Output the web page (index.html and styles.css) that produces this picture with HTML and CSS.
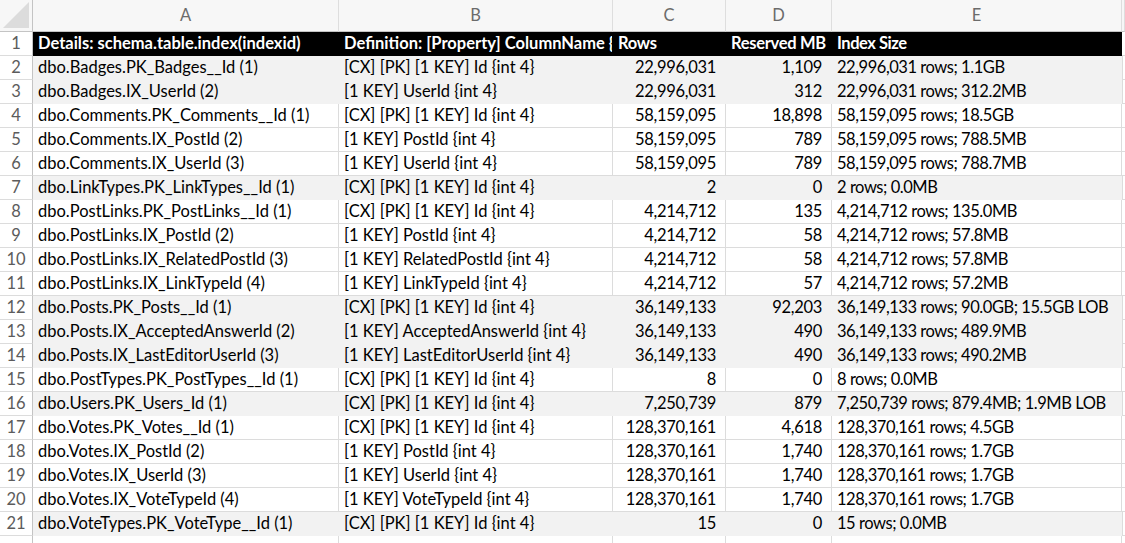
FILE: index.html
```html
<!DOCTYPE html>
<html>
<head>
<meta charset="utf-8">
<link rel="stylesheet" href="styles.css">
</head>
<body>
<div class="sheet">
  <div class="row colhead">
    <div class="cell corner"><div class="tri"></div></div>
    <div class="cell">A</div><div class="cell">B</div><div class="cell">C</div><div class="cell">D</div><div class="cell">E</div><div class="cell extra"></div>
  </div>
  <div class="row title">
    <div class="cell rn">1</div>
    <div class="cell">Details: schema.table.index(indexid)</div>
    <div class="cell">Definition: [Property] ColumnName {</div>
    <div class="cell">Rows</div>
    <div class="cell">Reserved MB</div>
    <div class="cell">Index Size</div>
    <div class="cell extra"></div>
  </div>
  <div class="row band"><div class="cell rn">2</div><div class="cell">dbo.Badges.PK_Badges__Id (1)</div><div class="cell">[CX] [PK] [1 KEY] Id {int 4}</div><div class="cell num">22,996,031</div><div class="cell num">1,109</div><div class="cell">22,996,031 rows; 1.1GB</div><div class="cell extra"></div></div>
  <div class="row band"><div class="cell rn">3</div><div class="cell">dbo.Badges.IX_UserId (2)</div><div class="cell">[1 KEY] UserId {int 4}</div><div class="cell num">22,996,031</div><div class="cell num">312</div><div class="cell">22,996,031 rows; 312.2MB</div><div class="cell extra"></div></div>
  <div class="row"><div class="cell rn">4</div><div class="cell">dbo.Comments.PK_Comments__Id (1)</div><div class="cell">[CX] [PK] [1 KEY] Id {int 4}</div><div class="cell num">58,159,095</div><div class="cell num">18,898</div><div class="cell">58,159,095 rows; 18.5GB</div><div class="cell extra"></div></div>
  <div class="row"><div class="cell rn">5</div><div class="cell">dbo.Comments.IX_PostId (2)</div><div class="cell">[1 KEY] PostId {int 4}</div><div class="cell num">58,159,095</div><div class="cell num">789</div><div class="cell">58,159,095 rows; 788.5MB</div><div class="cell extra"></div></div>
  <div class="row"><div class="cell rn">6</div><div class="cell">dbo.Comments.IX_UserId (3)</div><div class="cell">[1 KEY] UserId {int 4}</div><div class="cell num">58,159,095</div><div class="cell num">789</div><div class="cell">58,159,095 rows; 788.7MB</div><div class="cell extra"></div></div>
  <div class="row band"><div class="cell rn">7</div><div class="cell">dbo.LinkTypes.PK_LinkTypes__Id (1)</div><div class="cell">[CX] [PK] [1 KEY] Id {int 4}</div><div class="cell num">2</div><div class="cell num">0</div><div class="cell">2 rows; 0.0MB</div><div class="cell extra"></div></div>
  <div class="row"><div class="cell rn">8</div><div class="cell">dbo.PostLinks.PK_PostLinks__Id (1)</div><div class="cell">[CX] [PK] [1 KEY] Id {int 4}</div><div class="cell num">4,214,712</div><div class="cell num">135</div><div class="cell">4,214,712 rows; 135.0MB</div><div class="cell extra"></div></div>
  <div class="row"><div class="cell rn">9</div><div class="cell">dbo.PostLinks.IX_PostId (2)</div><div class="cell">[1 KEY] PostId {int 4}</div><div class="cell num">4,214,712</div><div class="cell num">58</div><div class="cell">4,214,712 rows; 57.8MB</div><div class="cell extra"></div></div>
  <div class="row"><div class="cell rn">10</div><div class="cell">dbo.PostLinks.IX_RelatedPostId (3)</div><div class="cell">[1 KEY] RelatedPostId {int 4}</div><div class="cell num">4,214,712</div><div class="cell num">58</div><div class="cell">4,214,712 rows; 57.8MB</div><div class="cell extra"></div></div>
  <div class="row"><div class="cell rn">11</div><div class="cell">dbo.PostLinks.IX_LinkTypeId (4)</div><div class="cell">[1 KEY] LinkTypeId {int 4}</div><div class="cell num">4,214,712</div><div class="cell num">57</div><div class="cell">4,214,712 rows; 57.2MB</div><div class="cell extra"></div></div>
  <div class="row band"><div class="cell rn">12</div><div class="cell">dbo.Posts.PK_Posts__Id (1)</div><div class="cell">[CX] [PK] [1 KEY] Id {int 4}</div><div class="cell num">36,149,133</div><div class="cell num">92,203</div><div class="cell">36,149,133 rows; 90.0GB; 15.5GB LOB</div><div class="cell extra"></div></div>
  <div class="row band"><div class="cell rn">13</div><div class="cell">dbo.Posts.IX_AcceptedAnswerId (2)</div><div class="cell">[1 KEY] AcceptedAnswerId {int 4}</div><div class="cell num">36,149,133</div><div class="cell num">490</div><div class="cell">36,149,133 rows; 489.9MB</div><div class="cell extra"></div></div>
  <div class="row band"><div class="cell rn">14</div><div class="cell">dbo.Posts.IX_LastEditorUserId (3)</div><div class="cell">[1 KEY] LastEditorUserId {int 4}</div><div class="cell num">36,149,133</div><div class="cell num">490</div><div class="cell">36,149,133 rows; 490.2MB</div><div class="cell extra"></div></div>
  <div class="row"><div class="cell rn">15</div><div class="cell">dbo.PostTypes.PK_PostTypes__Id (1)</div><div class="cell">[CX] [PK] [1 KEY] Id {int 4}</div><div class="cell num">8</div><div class="cell num">0</div><div class="cell">8 rows; 0.0MB</div><div class="cell extra"></div></div>
  <div class="row band"><div class="cell rn">16</div><div class="cell">dbo.Users.PK_Users_Id (1)</div><div class="cell">[CX] [PK] [1 KEY] Id {int 4}</div><div class="cell num">7,250,739</div><div class="cell num">879</div><div class="cell">7,250,739 rows; 879.4MB; 1.9MB LOB</div><div class="cell extra"></div></div>
  <div class="row"><div class="cell rn">17</div><div class="cell">dbo.Votes.PK_Votes__Id (1)</div><div class="cell">[CX] [PK] [1 KEY] Id {int 4}</div><div class="cell num">128,370,161</div><div class="cell num">4,618</div><div class="cell">128,370,161 rows; 4.5GB</div><div class="cell extra"></div></div>
  <div class="row"><div class="cell rn">18</div><div class="cell">dbo.Votes.IX_PostId (2)</div><div class="cell">[1 KEY] PostId {int 4}</div><div class="cell num">128,370,161</div><div class="cell num">1,740</div><div class="cell">128,370,161 rows; 1.7GB</div><div class="cell extra"></div></div>
  <div class="row"><div class="cell rn">19</div><div class="cell">dbo.Votes.IX_UserId (3)</div><div class="cell">[1 KEY] UserId {int 4}</div><div class="cell num">128,370,161</div><div class="cell num">1,740</div><div class="cell">128,370,161 rows; 1.7GB</div><div class="cell extra"></div></div>
  <div class="row"><div class="cell rn">20</div><div class="cell">dbo.Votes.IX_VoteTypeId (4)</div><div class="cell">[1 KEY] VoteTypeId {int 4}</div><div class="cell num">128,370,161</div><div class="cell num">1,740</div><div class="cell">128,370,161 rows; 1.7GB</div><div class="cell extra"></div></div>
  <div class="row band"><div class="cell rn">21</div><div class="cell">dbo.VoteTypes.PK_VoteType__Id (1)</div><div class="cell">[CX] [PK] [1 KEY] Id {int 4}</div><div class="cell num">15</div><div class="cell num">0</div><div class="cell">15 rows; 0.0MB</div><div class="cell extra"></div></div>
  <div class="row"><div class="cell rn"></div><div class="cell"></div><div class="cell"></div><div class="cell"></div><div class="cell"></div><div class="cell"></div><div class="cell extra"></div></div>
</div>
</body>
</html>
```

FILE: styles.css
```css
html, body {
  margin: 0;
  padding: 0;
  background: #ffffff;
  overflow: hidden;
}

.sheet {
  display: grid;
  grid-template-columns: 33px 306px 274px 113px 106px 290px 3px;
  grid-template-rows: 32px;
  grid-auto-rows: 24px;
  width: 1125px;
  font-family: Lato, "Open Sans", sans-serif;
  font-size: 16.5px;
  color: #000;
}

.row {
  display: contents;
}

.cell {
  box-sizing: border-box;
  border-right: 1px solid #dcdcdc;
  border-bottom: 1px solid #dcdcdc;
  padding: 0 5px;
  white-space: nowrap;
  overflow: hidden;
  display: flex;
  align-items: center;
  line-height: 1;
}

/* Rows / Reserved MB / Index Size: digits a touch narrower */
.row > .cell:nth-child(4),
.row > .cell:nth-child(5) {
  letter-spacing: -0.3px;
}

.row > .cell:nth-child(6) {
  letter-spacing: -0.45px;
}

.colhead > .cell:nth-child(n) {
  letter-spacing: 0;
}

.num {
  justify-content: flex-end;
  padding-right: 9px;
}

.extra {
  padding: 0;
  border-right: none;
}

/* column header */
.colhead .cell {
  background: #f7f7f7;
  color: #6b6b6b;
  justify-content: center;
  font-size: 16.5px;
  border-bottom: 1px solid #c4c4c4;
  border-right: 1px solid #dedede;
}

.colhead .corner {
  justify-content: flex-end;
  align-items: flex-end;
  padding: 0 3px 3px 0;
  border-right: 1px solid #c4c4c4;
}

.tri {
  width: 26px;
  height: 26px;
  background: #dcdcdc;
  clip-path: polygon(100% 0, 100% 100%, 0 100%);
}

/* row numbers */
.rn {
  justify-content: center;
  color: #5c5c5c;
  background: #ffffff;
  border-right: 1px solid #c4c4c4;
  font-size: 16.5px;
  padding: 0;
}

/* title row */
.title .cell {
  background: #000;
  color: #fff;
  font-weight: bold;
  border-color: #000;
}

.title .rn {
  background: #fff;
  color: #5c5c5c;
  font-weight: normal;
  border-right-color: #c4c4c4;
  border-bottom-color: #dcdcdc;
}

.title .extra {
  background: #fff;
  border-color: #dcdcdc;
}

/* banded rows */
.band .cell {
  background: #f2f2f2;
  border-color: #f2f2f2;
}

.band .rn {
  background: #fff;
  border-right-color: #c4c4c4;
  border-bottom-color: #dcdcdc;
}

.band .extra {
  background: #fff;
  border-left: 1px solid #dcdcdc;
  border-bottom-color: #dcdcdc;
}
```
